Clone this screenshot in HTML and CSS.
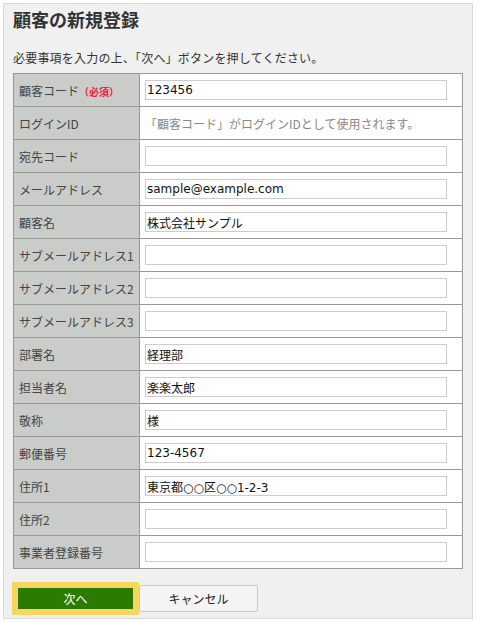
FILE: index.html
```html
<!DOCTYPE html>
<html lang="ja">
<head>
<meta charset="utf-8">
<title>顧客の新規登録</title>
<link rel="stylesheet" href="styles.css">
</head>
<body>
<div class="panel">
  <h1 class="title">顧客の新規登録</h1>
  <p class="lead">必要事項を入力の上、「次へ」ボタンを押してください。</p>
  <table class="form">
    <tr><th>顧客コード<span class="req">（必須）</span></th><td><input class="field" type="text" value="123456"></td></tr>
    <tr><th>ログインID</th><td class="hint">「顧客コード」がログインIDとして使用されます。</td></tr>
    <tr><th>宛先コード</th><td><input class="field" type="text" value=""></td></tr>
    <tr><th>メールアドレス</th><td><input class="field" type="text" value="sample@example.com"></td></tr>
    <tr><th>顧客名</th><td><input class="field" type="text" value="株式会社サンプル"></td></tr>
    <tr><th>サブメールアドレス1</th><td><input class="field" type="text" value=""></td></tr>
    <tr><th>サブメールアドレス2</th><td><input class="field" type="text" value=""></td></tr>
    <tr><th>サブメールアドレス3</th><td><input class="field" type="text" value=""></td></tr>
    <tr><th>部署名</th><td><input class="field" type="text" value="経理部"></td></tr>
    <tr><th>担当者名</th><td><input class="field" type="text" value="楽楽太郎"></td></tr>
    <tr><th>敬称</th><td><input class="field" type="text" value="様"></td></tr>
    <tr><th>郵便番号</th><td><input class="field" type="text" value="123-4567"></td></tr>
    <tr><th>住所1</th><td><input class="field" type="text" value="東京都○○区○○1-2-3"></td></tr>
    <tr><th>住所2</th><td><input class="field" type="text" value=""></td></tr>
    <tr><th>事業者登録番号</th><td><input class="field" type="text" value=""></td></tr>
  </table>
  <div class="actions">
    <button class="btn-next" type="button">次へ</button>
    <button class="btn-cancel" type="button">キャンセル</button>
  </div>
</div>
</body>
</html>
```
FILE: styles.css
```css
html, body {
  margin: 0;
  padding: 0;
  background: #ffffff;
}
body {
  font-family: "DejaVu Sans", "Noto Sans CJK JP", sans-serif;
  font-size: 12px;
  color: #333333;
}
.panel {
  margin: 3px 0 0 3px;
  width: 470px;
  height: 616px;
  box-sizing: border-box;
  border: 1px solid #d9dad9;
  background: #eff0ef;
  padding: 3px 9px 0 9px;
}
.title {
  margin: 0;
  font-size: 18px;
  line-height: 24px;
  font-weight: bold;
  color: #333333;
  font-family: "Noto Sans CJK JP", sans-serif;
}
.lead {
  margin: 18px 0 6px 0;
  line-height: 18px;
  font-size: 12px;
  letter-spacing: 0.2px;
  font-family: "Noto Sans CJK JP", sans-serif;
}
.form {
  border-collapse: collapse;
  width: 450px;
  background: #ffffff;
  border: 1px solid #999999;
}
.form th, .form td {
  border: 1px solid #999999;
  height: 33px;
  box-sizing: border-box;
  padding: 0 5px;
  vertical-align: middle;
}
.form th {
  width: 126px;
  background: #c9ccc9;
  text-align: left;
  font-weight: normal;
  color: #444444;
  font-family: "Noto Sans CJK JP", sans-serif;
  white-space: nowrap;
}
.req {
  color: #ee2233;
  font-size: 10px;
  font-weight: bold;
}
.hint {
  color: #888888;
  font-family: "Noto Sans CJK JP", sans-serif;
}
.field {
  display: block;
  width: 302px;
  height: 20px;
  box-sizing: border-box;
  margin: 0;
  border: 1px solid #cccccc;
  padding: 0 1px;
  font-family: "DejaVu Sans", "Noto Sans CJK JP", sans-serif;
  font-size: 12px;
  color: #111111;
  background: #ffffff;
  outline: none;
}
.actions {
  display: flex;
  align-items: center;
  margin-top: 13px;
  margin-left: -1px;
}
.btn-next {
  width: 127px;
  height: 33px;
  box-sizing: border-box;
  border: 6px solid #f6d65c;
  background: #2a7b00;
  color: #ffffff;
  font-family: "Noto Sans CJK JP", sans-serif;
  font-size: 12px;
  padding: 0;
  margin: 0;
}
.btn-cancel {
  width: 119px;
  height: 27px;
  box-sizing: border-box;
  border: 1px solid #c8c8c8;
  border-radius: 2px;
  background: #f4f4f4;
  color: #222222;
  font-family: "Noto Sans CJK JP", sans-serif;
  font-size: 12px;
  padding: 0;
  margin: 0;
}
```
